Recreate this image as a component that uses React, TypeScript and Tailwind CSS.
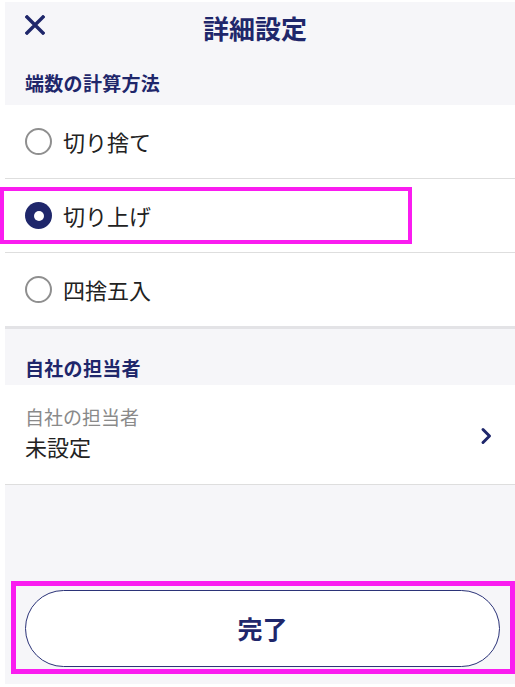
import { useState } from 'react';

const NAVY = 'text-[#1f276b]';

const options = ['切り捨て', '切り上げ', '四捨五入'];

function Radio({ checked }: { checked: boolean }) {
  if (checked) {
    return (
      <span className="w-[27px] h-[27px] rounded-full bg-[#1f276b] flex items-center justify-center shrink-0">
        <span className="w-[10px] h-[10px] rounded-full bg-white" />
      </span>
    );
  }
  return <span className="w-[27px] h-[27px] rounded-full border-2 border-[#8f8f8f] bg-white shrink-0" />;
}

export default function App() {
  const [selected, setSelected] = useState(1);

  return (
    <div
      className="relative w-[515px] h-[687px] bg-white pl-[5px] pt-[2px] overflow-hidden"
      style={{ fontFamily: '"Noto Sans CJK JP", "Noto Sans", sans-serif' }}
    >
      <div className="flex flex-col h-[682px] bg-[#f6f6f9]">
        {/* Header */}
        <div className="relative h-[52px] flex items-center justify-center pr-[10px] shrink-0">
          <button className="absolute left-[20px] top-[13px] w-[20px] h-[20px] flex items-center justify-center">
            <svg width="20" height="20" viewBox="0 0 20 20" fill="none">
              <path d="M2 2L18 18M18 2L2 18" stroke="#1f276b" strokeWidth="3.4" strokeLinecap="square" />
            </svg>
          </button>
          <h1 className={`text-[26px] font-bold ${NAVY} leading-none`}>詳細設定</h1>
        </div>

        {/* Rounding section */}
        <div className="h-[51px] flex items-center pt-[8px] px-[20px] shrink-0">
          <h2 className={`text-[19px] font-bold ${NAVY} tracking-[0.3px]`}>端数の計算方法</h2>
        </div>
        <div className="bg-white">
          {options.map((o, i) => (
            <div
              key={o}
              onClick={() => setSelected(i)}
              className={`h-[74px] flex items-center gap-[11px] px-[20px] border-b ${
                i === options.length - 1 ? 'border-b-[3px] border-[#e3e3e6] h-[76px]' : 'border-[#dedede]'
              }`}
            >
              <Radio checked={selected === i} />
              <span className="text-[22px] text-[#222222]">{o}</span>
            </div>
          ))}
        </div>

        {/* Staff section */}
        <div className="h-[56px] flex items-center pt-[22px] px-[20px] shrink-0">
          <h2 className={`text-[19px] font-bold ${NAVY} tracking-[0.3px]`}>自社の担当者</h2>
        </div>
        <div className="bg-white h-[100px] border-b border-[#dedede] flex items-center justify-between px-[20px]">
          <div className="flex flex-col gap-[1px] -mt-[5px]">
            <span className="text-[19px] text-[#8a8a8a] leading-[26px]">自社の担当者</span>
            <span className="text-[22px] text-[#222222] leading-[30px]">未設定</span>
          </div>
          <svg width="12" height="18" viewBox="0 0 12 18" fill="none" className="mr-[3px] mt-[3px]">
            <path d="M3 2.5L9.5 9L3 15.5" stroke="#1f276b" strokeWidth="3" strokeLinecap="round" strokeLinejoin="round" />
          </svg>
        </div>

        <div className="flex-1" />

        {/* Done button */}
        <div className="px-[20px] pb-[17px] pr-[15px] shrink-0">
          <button className="w-full h-[77px] rounded-full border-[1.5px] border-[#2b3378] bg-white flex items-center justify-center">
            <span className={`text-[25px] font-bold ${NAVY}`}>完了</span>
          </button>
        </div>
      </div>

      {/* Annotation highlights */}
      <div className="absolute left-0 top-[187px] w-[412px] h-[57px] border-4 border-[#fa1cf0] pointer-events-none" />
      <div className="absolute left-[11px] top-[581px] w-[504px] h-[93px] border-[5px] border-[#fa1cf0] pointer-events-none" />
    </div>
  );
}
